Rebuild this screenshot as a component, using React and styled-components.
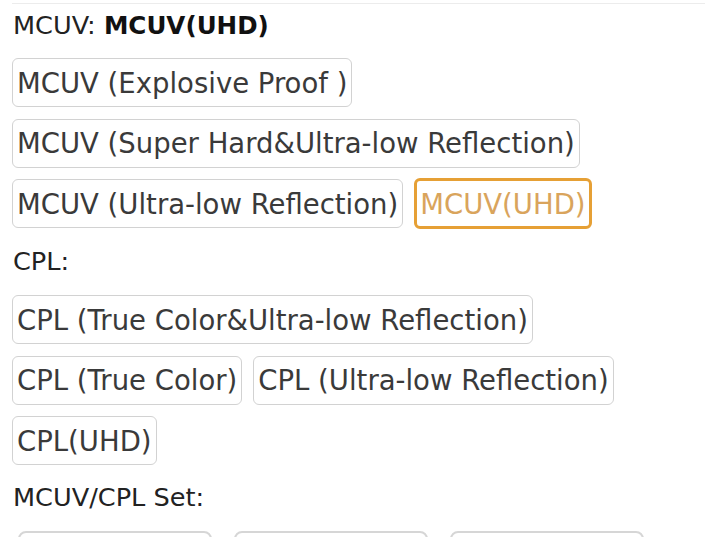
import React from "react";
import styled, { createGlobalStyle } from "styled-components";

const Global = createGlobalStyle`
  html, body { margin: 0; padding: 0; background: #fff; }
  body { font-family: "DejaVu Sans", "Liberation Sans", sans-serif; color: #333; }
`;

const Page = styled.div`
  width: 693px;
  margin-left: 12px;
  padding-top: 3px;
`;

const Section = styled.section`
  border-top: 1px solid #ececec;
`;

const Label = styled.div`
  height: 40px;
  font-size: 25.6px;
  line-height: 40px;
  color: #222;
  margin-top: ${(p) => p.$top || 0}px;
  margin-bottom: ${(p) => p.$bottom || 14}px;
  padding-left: 1px;
  white-space: nowrap;
  strong { font-weight: 700; color: #111; font-size: 24.6px; line-height: 40px; }
`;

const Options = styled.div`
  display: flex;
  flex-wrap: wrap;
  gap: 11.5px 11px;
`;

const Option = styled.button`
  box-sizing: border-box;
  font-family: inherit;
  font-size: 27.5px;
  line-height: 46px;
  height: ${(p) => (p.$active ? 51 : 49)}px;
  margin-top: ${(p) => (p.$active ? -1 : 0)}px;
  padding: 0 ${(p) => (p.$active ? 3 : 4)}px;
  background: #fff;
  color: ${(p) => (p.$active ? "#d9a45c" : "#3a3a3a")};
  border: ${(p) => (p.$active ? "3px solid #e6a035" : "1px solid #d2d2d2")};
  border-radius: 6px;
  white-space: nowrap;
  cursor: pointer;
`;

const Thumbs = styled.div`
  display: flex;
  gap: 22px;
  padding-left: 6px;
`;

const Thumb = styled.div`
  box-sizing: border-box;
  width: 194px;
  height: 120px;
  border: 2px solid #d6d6d6;
  border-radius: 8px;
  background: #fff;
`;

const groups = [
  {
    label: <>MCUV: <strong>MCUV(UHD)</strong></>,
    top: 1,
    bottom: 13,
    items: [
      "MCUV (Explosive Proof )",
      "MCUV (Super Hard&Ultra-low Reflection)",
      "MCUV (Ultra-low Reflection)",
      "MCUV(UHD)",
    ],
    active: "MCUV(UHD)",
  },
  {
    label: "CPL:",
    top: 12,
    bottom: 14,
    items: [
      "CPL (True Color&Ultra-low Reflection)",
      "CPL (True Color)",
      "CPL (Ultra-low Reflection)",
      "CPL(UHD)",
    ],
  },
];

export default function App() {
  return (
    <Page>
      <Global />
      <Section>
        {groups.map((g, i) => (
          <div key={i}>
            <Label $top={g.top} $bottom={g.bottom}>{g.label}</Label>
            <Options>
              {g.items.map((it) => (
                <Option key={it} $active={it === g.active}>
                  {it}
                </Option>
              ))}
            </Options>
          </div>
        ))}
        <Label $top={12} $bottom={14}>MCUV/CPL Set:</Label>
        <Thumbs>
          <Thumb />
          <Thumb />
          <Thumb />
        </Thumbs>
      </Section>
    </Page>
  );
}
